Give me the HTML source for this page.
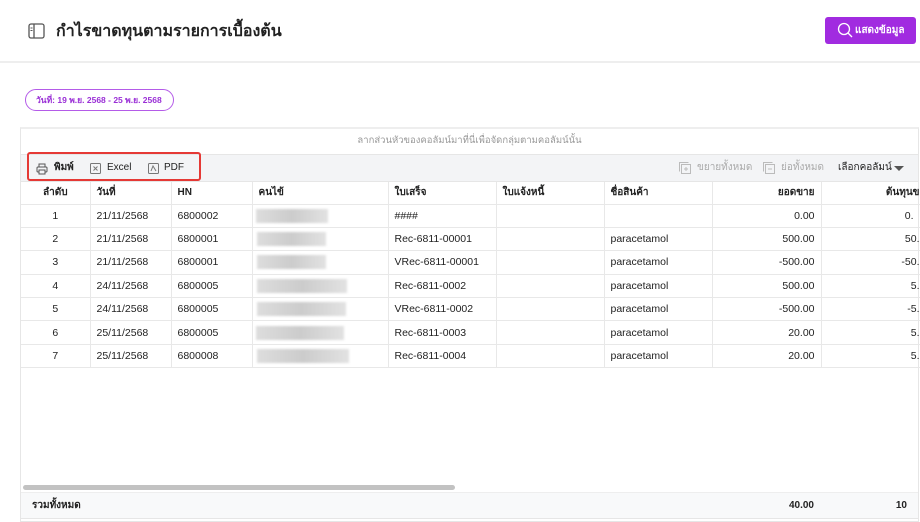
<!DOCTYPE html>
<html><head><meta charset="utf-8"><style>
*{box-sizing:border-box;margin:0;padding:0}
body{width:920px;height:522px;overflow:hidden;background:#fff;font-family:"Liberation Sans","Noto Sans CJK SC",sans-serif;color:#222;position:relative}
.hdr{position:absolute;left:0;top:0;width:920px;height:63px;border-bottom:2px solid #eee}
.title{position:absolute;left:56px;top:21px;font-size:16px;font-weight:bold;color:#222;line-height:22px}
.btn{position:absolute;left:825px;top:17px;width:91px;height:27px;background:#a12be0;border-radius:3px;color:#fff;font-size:10px;font-weight:bold;padding:0 0 0 30px;line-height:27px}
.pill{position:absolute;left:25px;top:89px;width:149px;height:22px;border:1px solid #b45be8;border-radius:11px;color:#9a2fd6;font-size:8.5px;font-weight:bold;padding-left:10px;line-height:20px}
.grid{position:absolute;left:20px;top:127px;width:899px;height:395px;border:1px solid #e6e6e6;border-top:2px solid #eee}
.grp{height:26px;border-bottom:1px solid #e6e6e6;text-align:center;font-size:9.5px;color:#999;line-height:24px}
.tb{height:27px;background:#f3f4f6;border-bottom:1px solid #e6e6e6;position:relative;font-size:10px}
.tb span{position:absolute;top:0;line-height:26px}
.red{position:absolute;left:6px;top:-3px;width:174px;height:29px;border:2px solid #e53935;border-radius:3px}
table{border-collapse:collapse;font-size:10.5px;table-layout:fixed;width:899px}
td,th{border-right:1px solid #e8e8e8;border-bottom:1px solid #e8e8e8;height:23.4px;padding:0 6px;white-space:nowrap;overflow:hidden;line-height:12px}
th{height:22px;text-align:left;font-weight:bold;font-size:10px}
.c{text-align:center}.r{text-align:right}
.blur{display:inline-block;height:14px;background:linear-gradient(90deg,#ddd,#ccc,#e2e2e2);vertical-align:middle;filter:blur(1px)}
.sb{position:absolute;left:2px;top:356px;width:432px;height:5px;background:#c2c2c2;border-radius:3px}
.ft{position:absolute;left:0;top:363px;width:897px;height:27px;background:#f8f9fa;border-top:1px solid #eee;border-bottom:1px solid #e6e6e6;font-size:10px;font-weight:bold}
.ft span{position:absolute;top:0;line-height:25px}
</style></head><body>
<div class="hdr">
<svg style="position:absolute;left:28px;top:23px" width="17" height="16" viewBox="0 0 17 16"><rect x="1" y="1" width="15" height="14" rx="2" fill="none" stroke="#555" stroke-width="1.3"/><line x1="6" y1="1" x2="6" y2="15" stroke="#555" stroke-width="1.3"/><line x1="2.5" y1="5" x2="4.5" y2="5" stroke="#555"/><line x1="2.5" y1="7.5" x2="4.5" y2="7.5" stroke="#555"/></svg>
<div class="title">กำไรขาดทุนตามรายการเบื้องต้น</div>
<div class="btn"><svg style="position:absolute;left:12px;top:5px" width="16" height="16" viewBox="0 0 16 16"><circle cx="7" cy="7" r="5.5" fill="none" stroke="#fff" stroke-width="1.3"/><line x1="11" y1="11" x2="15" y2="15" stroke="#fff" stroke-width="1.3"/></svg>แสดงข้อมูล</div>
</div>
<div class="pill">วันที่: 19 พ.ย. 2568 - 25 พ.ย. 2568</div>
<div class="grid">
<div class="grp">ลากส่วนหัวของคอลัมน์มาที่นี่เพื่อจัดกลุ่มตามคอลัมน์นั้น</div>
<div class="tb">
<div class="red"></div>
<svg style="position:absolute;left:15px;top:8px" width="12" height="12" viewBox="0 0 12 12"><rect x="3" y="1" width="6" height="3" fill="none" stroke="#555"/><rect x="1" y="4" width="10" height="5" rx="1" fill="none" stroke="#555"/><rect x="3" y="7" width="6" height="4" fill="#f3f4f6" stroke="#555"/></svg>
<span style="left:33px;font-weight:bold">พิมพ์</span>
<svg style="position:absolute;left:69px;top:8px" width="11" height="11"><rect x=".5" y=".5" width="10" height="10" rx="1" fill="none" stroke="#777"/><path d="M3.5 3.5l4 4M7.5 3.5l-4 4" stroke="#777"/></svg>
<span style="left:86px">Excel</span>
<svg style="position:absolute;left:127px;top:8px" width="11" height="11"><rect x=".5" y=".5" width="10" height="10" rx="1" fill="none" stroke="#777"/><path d="M3 8l2-5 3 5" fill="none" stroke="#777"/></svg>
<span style="left:143px">PDF</span>
<svg style="position:absolute;left:658px;top:7px" width="12" height="12"><rect x="2.5" y="2.5" width="9" height="9" fill="none" stroke="#bbb"/><path d="M.5 9.5V.5h9M7 5v4M5 7h4" fill="none" stroke="#bbb"/></svg>
<span style="left:676px;color:#aaa">ขยายทั้งหมด</span>
<svg style="position:absolute;left:742px;top:7px" width="12" height="12"><rect x="2.5" y="2.5" width="9" height="9" fill="none" stroke="#bbb"/><path d="M.5 9.5V.5h9M5 7h4" fill="none" stroke="#bbb"/></svg>
<span style="left:760px;color:#aaa">ย่อทั้งหมด</span>
<span style="left:817px">เลือกคอลัมน์</span>
<svg style="position:absolute;left:873px;top:11px" width="10" height="6"><path d="M0 0h10L5 5z" fill="#555"/></svg>
</div>
<table>
<colgroup><col style="width:69px"><col style="width:81px"><col style="width:81px"><col style="width:136px"><col style="width:108px"><col style="width:108px"><col style="width:108px"><col style="width:109px"><col style="width:99px"></colgroup>
<tr><th class="c">ลำดับ</th><th>วันที่</th><th>HN</th><th>คนไข้</th><th>ใบเสร็จ</th><th>ใบแจ้งหนี้</th><th>ชื่อสินค้า</th><th class="r">ยอดขาย</th><th class="r" style="padding-right:0">ต้นทุนข</th></tr>
<tr><td class="c">1</td><td>21/11/2568</td><td>6800002</td><td style="padding-left:3px"><span class="blur" style="width:72px"></span></td><td>####</td><td></td><td></td><td class="r">0.00</td><td class="r">0.</td></tr>
<tr><td class="c">2</td><td>21/11/2568</td><td>6800001</td><td style="padding-left:4px"><span class="blur" style="width:69px"></span></td><td>Rec-6811-00001</td><td></td><td>paracetamol</td><td class="r">500.00</td><td class="r" style="padding-right:0">50.</td></tr>
<tr><td class="c">3</td><td>21/11/2568</td><td>6800001</td><td style="padding-left:4px"><span class="blur" style="width:69px"></span></td><td>VRec-6811-00001</td><td></td><td>paracetamol</td><td class="r">-500.00</td><td class="r" style="padding-right:0">-50.</td></tr>
<tr><td class="c">4</td><td>24/11/2568</td><td>6800005</td><td style="padding-left:4px"><span class="blur" style="width:90px"></span></td><td>Rec-6811-0002</td><td></td><td>paracetamol</td><td class="r">500.00</td><td class="r" style="padding-right:0">5.</td></tr>
<tr><td class="c">5</td><td>24/11/2568</td><td>6800005</td><td style="padding-left:4px"><span class="blur" style="width:89px"></span></td><td>VRec-6811-0002</td><td></td><td>paracetamol</td><td class="r">-500.00</td><td class="r" style="padding-right:0">-5.</td></tr>
<tr><td class="c">6</td><td>25/11/2568</td><td>6800005</td><td style="padding-left:3px"><span class="blur" style="width:88px"></span></td><td>Rec-6811-0003</td><td></td><td>paracetamol</td><td class="r">20.00</td><td class="r" style="padding-right:0">5.</td></tr>
<tr><td class="c">7</td><td>25/11/2568</td><td>6800008</td><td style="padding-left:4px"><span class="blur" style="width:92px"></span></td><td>Rec-6811-0004</td><td></td><td>paracetamol</td><td class="r">20.00</td><td class="r" style="padding-right:0">5.</td></tr>
</table>
<div class="sb"></div>
<div class="ft"><span style="left:11px">รวมทั้งหมด</span><span style="right:104px">40.00</span><span style="right:11px">10</span></div>
</div>
</body></html>
